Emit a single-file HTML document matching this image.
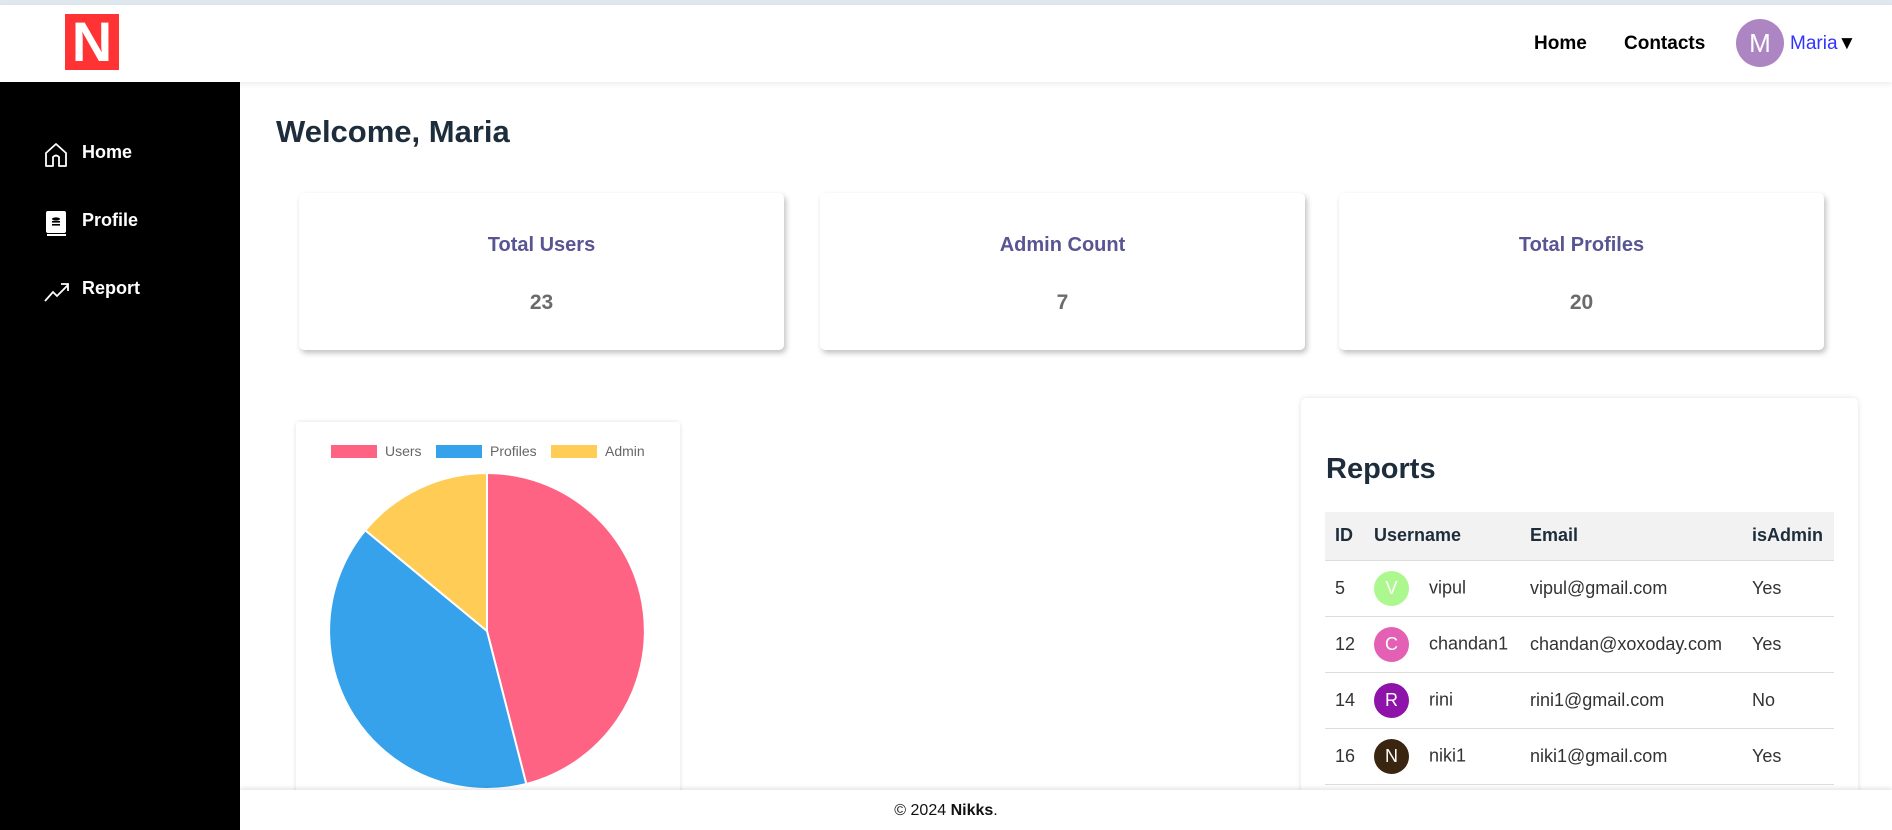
<!DOCTYPE html>
<html style="width:1892px;height:830px;overflow:hidden"><head><meta charset="utf-8"><style>
*{margin:0;padding:0;box-sizing:border-box}
body{width:1892px;height:830px;overflow:hidden;background:#fff;font-family:"Segoe UI","Liberation Sans",sans-serif;position:relative}
.topline{position:absolute;left:0;top:0;width:1892px;height:5px;background:#dfe8ee}
.header{position:absolute;left:0;top:5px;width:1892px;height:77px;background:#fff;box-shadow:0 2px 6px rgba(0,0,0,.08);z-index:3}
.logo{position:absolute;left:65px;top:9px;width:54px;height:56px;background:#ff3333;color:#fff;font:bold 56px/56px "Liberation Sans",sans-serif;text-align:center}
.nav{position:absolute;top:28px;font-weight:bold;font-size:19px;color:#000}
.av{position:absolute;border-radius:50%;color:#fff;text-align:center}
.side{position:absolute;left:0;top:82px;width:240px;height:748px;background:#000}
.si{position:absolute;left:82px;color:#fff;font-weight:bold;font-size:18px}
.ic{position:absolute;left:44px}
h1{position:absolute;left:276px;top:114px;font-size:31px;color:#1e2d3b;font-weight:bold}
.card{position:absolute;top:193px;width:485px;height:157px;background:#fff;border-radius:5px;box-shadow:2px 3px 6px rgba(0,0,0,.25);text-align:center}
.card .t{margin-top:41px;font-size:20px;font-weight:bold;color:#585592}
.card .n{margin-top:34px;font-size:21px;font-weight:bold;color:#6b6b6b}
.chart{position:absolute;left:296px;top:422px;width:384px;height:408px;background:#fff;box-shadow:0 0 5px rgba(0,0,0,.12);border-radius:3px}
.rep{position:absolute;left:1301px;top:398px;width:557px;height:432px;background:#fff;box-shadow:0 0 6px rgba(0,0,0,.12);border-radius:5px;overflow:hidden}
.rep h2{position:absolute;left:25px;top:55px;font-size:29px;color:#1e2d3b}
table{position:absolute;left:24px;top:114px;width:509px;border-collapse:collapse;font-size:18px;color:#222}
th{background:#f2f2f2;text-align:left;height:48px;font-weight:bold;color:#1e2d3b;border-bottom:1px solid #ddd}
td{height:56px;border-bottom:1px solid #ddd;color:#333}
.ra{display:inline-block;width:35px;height:35px;border-radius:50%;color:#fff;text-align:center;line-height:35px;font-size:18px;vertical-align:middle;margin-right:20px}
.footer{position:absolute;left:240px;top:790px;width:1652px;height:40px;background:#fff;box-shadow:0 -2px 4px rgba(0,0,0,.1);font-size:16px;line-height:42px;color:#111;z-index:2}
.footer span{position:absolute;left:0;width:1412px;text-align:center}
</style></head><body>
<div class="topline"></div>
<div class="header">
<div class="logo">N</div>
<div class="nav" style="left:1534px">Home</div>
<div class="nav" style="left:1624px">Contacts</div>
<div class="av" style="left:1736px;top:14px;width:48px;height:48px;background:#ad85c2;font-size:26px;line-height:48px">M</div>
<div style="position:absolute;left:1790px;top:28px;font-size:19px;color:#3333ff">Maria<span style="color:#000">▼</span></div>
</div>
<div class="side">
<svg class="ic" style="top:60px" width="24" height="26" viewBox="0 0 24 26" fill="none" stroke="#fff" stroke-width="1.8" stroke-linejoin="round"><path d="M2 11 L12 2 L22 11 V24 H15 V15 Q12 12 9 15 V24 H2 Z"/></svg>
<div class="si" style="top:60px">Home</div>
<svg class="ic" style="top:129px;left:46px" width="20" height="25" viewBox="0 0 20 25"><rect x="0" y="0" width="20" height="22" rx="2" fill="#fff"/><rect x="1" y="23" width="19" height="2" fill="#fff"/><ellipse cx="10" cy="8" rx="4" ry="1.6" fill="#000"/><rect x="6" y="10" width="8" height="1.6" fill="#000"/><rect x="6" y="13" width="8" height="1.6" fill="#000"/></svg>
<div class="si" style="top:128px">Profile</div>
<svg class="ic" style="top:200px" width="26" height="20" viewBox="0 0 26 20" fill="none" stroke="#fff" stroke-width="1.8"><path d="M1 19 L9 10 L13 14 L24 3 M17 2 H24 V9"/></svg>
<div class="si" style="top:196px">Report</div>
</div>
<h1>Welcome, Maria</h1>
<div class="card" style="left:299px"><div class="t">Total Users</div><div class="n">23</div></div>
<div class="card" style="left:820px"><div class="t">Admin Count</div><div class="n">7</div></div>
<div class="card" style="left:1339px"><div class="t">Total Profiles</div><div class="n">20</div></div>
<div class="chart"></div>
<svg style="position:absolute;left:0;top:0" width="1892" height="830">
<g font-family="Liberation Sans,sans-serif" font-size="14" fill="#666">
<rect x="331" y="445" width="46" height="13" fill="#ff6384"/><text x="385" y="456">Users</text>
<rect x="436" y="445" width="46" height="13" fill="#36a2eb"/><text x="490" y="456">Profiles</text>
<rect x="551" y="445" width="46" height="13" fill="#ffcd56"/><text x="605" y="456">Admin</text>
</g>
<g stroke="#fff" stroke-width="2">
<path d="M487 631 L487 473 A158 158 0 0 1 526.3 784 Z" fill="#ff6384"/>
<path d="M487 631 L526.3 784 A158 158 0 0 1 365.3 530.3 Z" fill="#36a2eb"/>
<path d="M487 631 L365.3 530.3 A158 158 0 0 1 487 473 Z" fill="#ffcd56"/>
</g>
</svg>
<div class="rep"><h2>Reports</h2>
<table>
<tr><th style="width:49px;padding-left:10px">ID</th><th style="width:156px">Username</th><th style="width:222px">Email</th><th>isAdmin</th></tr>
<tr><td style="padding-left:10px">5</td><td><span class="ra" style="background:#adf78f">V</span>vipul</td><td>vipul@gmail.com</td><td>Yes</td></tr>
<tr><td style="padding-left:10px">12</td><td><span class="ra" style="background:#e360b5">C</span>chandan1</td><td>chandan@xoxoday.com</td><td>Yes</td></tr>
<tr><td style="padding-left:10px">14</td><td><span class="ra" style="background:#8e13a8">R</span>rini</td><td>rini1@gmail.com</td><td>No</td></tr>
<tr><td style="padding-left:10px">16</td><td><span class="ra" style="background:#3a2510">N</span>niki1</td><td>niki1@gmail.com</td><td>Yes</td></tr>
</table></div>
<div class="footer"><span>© 2024 <b>Nikks</b>.</span></div>
</body></html>
